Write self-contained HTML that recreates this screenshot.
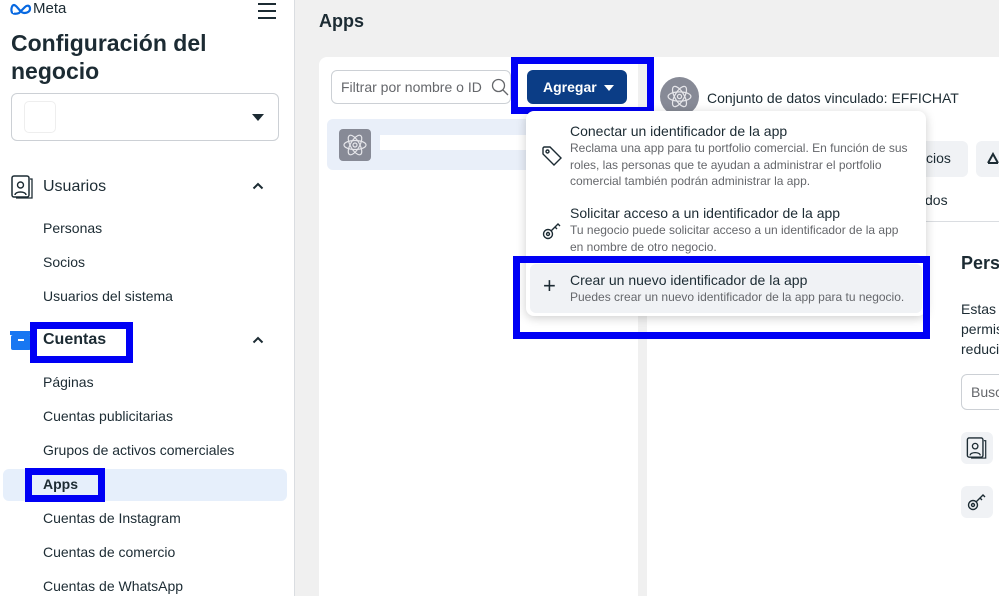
<!DOCTYPE html>
<html><head><meta charset="utf-8"><style>
*{box-sizing:border-box;margin:0;padding:0}
html,body{width:999px;height:596px;overflow:hidden}
body{background:#f0f0f0;font-family:"Liberation Sans",sans-serif;color:#1c2b33;position:relative}
.a{position:absolute}
.side{left:0;top:0;width:295px;height:596px;background:#fff;border-right:1px solid #dadde1}
.t{position:absolute;white-space:nowrap}
.nav{font-size:14px;left:43px;color:#1c2b33}
.hl{position:absolute;border:7px solid #0000f5}
.sm{font-size:12px;color:#65676b;line-height:16.5px}
</style></head><body>
<div class="a side">
 <svg class="a" style="left:10px;top:3px" width="22" height="12" viewBox="0 0 22 12"><path d="M3 10C0.5 10 1 2 4 2C7 2 10 10 14 10C18 10 20 8 20 6C20 2 17 2 15 4L9 10C7 11 3 11 3 10" fill="none" stroke="#0668e1" stroke-width="2.2"/></svg>
 <div class="t" style="left:33px;top:0px;font-size:15px;color:#1c2b33">Meta</div>
 <div class="a" style="left:258px;top:3px;width:18px;height:2px;background:#1c2b33;box-shadow:0 7px 0 #1c2b33,0 14px 0 #1c2b33"></div>
 <div class="t" style="left:11px;top:29px;font-size:23px;font-weight:bold;line-height:28px;color:#1c2b33">Configuración del<br>negocio</div>
 <div class="a" style="left:11px;top:93px;width:268px;height:48px;border:1px solid #ccd0d5;border-radius:6px"></div>
 <div class="a" style="left:24px;top:101px;width:32px;height:32px;border:1px solid #eee;border-radius:5px"></div>
 <div class="a" style="left:252px;top:114px;border-left:6px solid transparent;border-right:6px solid transparent;border-top:7px solid #1c2b33"></div>
 <svg class="a" style="left:11px;top:175px" width="23" height="24" viewBox="0 0 23 24"><rect x="1" y="1" width="17" height="21" rx="2" fill="none" stroke="#1c2b33" stroke-width="1.5"/><path d="M19 4h2v19H5" fill="none" stroke="#1c2b33" stroke-width="1.3"/><circle cx="9.5" cy="10" r="3" fill="none" stroke="#1c2b33" stroke-width="1.4"/><path d="M4 20c0-4 11-4 11 0" fill="none" stroke="#1c2b33" stroke-width="1.4"/></svg>
 <div class="t" style="left:43px;top:178px;font-size:16px">Usuarios</div>
 <svg class="a" style="left:252px;top:182px" width="12" height="8" viewBox="0 0 12 8"><path d="M1.5 6.5L6 2l4.5 4.5" fill="none" stroke="#1c2b33" stroke-width="2"/></svg>
 <div class="t nav" style="top:220px">Personas</div>
 <div class="t nav" style="top:254px">Socios</div>
 <div class="t nav" style="top:288px">Usuarios del sistema</div>
 <div class="a" style="left:11px;top:335px;width:20px;height:15px;background:#1877f2;border-radius:2px"></div>
 <div class="a" style="left:10px;top:331px;width:22px;height:4px;background:#1877f2"></div>
 <div class="a" style="left:18px;top:339px;width:6px;height:1.5px;background:#fff"></div>
 <div class="t" style="left:43px;top:331px;font-size:16px;font-weight:bold">Cuentas</div>
 <svg class="a" style="left:252px;top:336px" width="12" height="8" viewBox="0 0 12 8"><path d="M1.5 6.5L6 2l4.5 4.5" fill="none" stroke="#1c2b33" stroke-width="2"/></svg>
 <div class="hl" style="left:30px;top:322px;width:103px;height:41px"></div>
 <div class="t nav" style="top:374px">Páginas</div>
 <div class="t nav" style="top:408px">Cuentas publicitarias</div>
 <div class="t nav" style="top:442px">Grupos de activos comerciales</div>
 <div class="a" style="left:3px;top:469px;width:284px;height:32px;background:#e6effb;border-radius:6px"></div>
 <div class="t nav" style="top:476px;font-weight:bold">Apps</div>
 <div class="hl" style="left:25px;top:468px;width:80px;height:34px"></div>
 <div class="t nav" style="top:510px">Cuentas de Instagram</div>
 <div class="t nav" style="top:544px">Cuentas de comercio</div>
 <div class="t nav" style="top:578px">Cuentas de WhatsApp</div>
</div>
<div class="t" style="left:319px;top:11px;font-size:18px;font-weight:bold">Apps</div>
<div class="a" style="left:319px;top:57px;width:319px;height:560px;background:#fff;border-radius:8px"></div>
<div class="a" style="left:331px;top:70px;width:180px;height:34px;border:1px solid #ccd0d5;border-radius:6px"></div>
<div class="t" style="left:341px;top:79px;font-size:14px;color:#65676b">Filtrar por nombre o ID</div>
<svg class="a" style="left:491px;top:78px" width="18" height="18" viewBox="0 0 18 18"><circle cx="7.5" cy="7.5" r="6" fill="none" stroke="#65676b" stroke-width="1.3"/><path d="M12 12l5 5" stroke="#65676b" stroke-width="1.3"/></svg>
<div class="a" style="left:327px;top:119px;width:311px;height:51px;background:#e9eff9;border-radius:6px"></div>
<div class="a" style="left:339px;top:129px;width:32px;height:32px;background:#878a96;border-radius:4px"></div>
<svg class="a" style="left:341px;top:131px" width="28" height="28" viewBox="0 0 28 28" fill="none" stroke="#e6e6ea" stroke-width="1.2"><ellipse cx="14" cy="14" rx="11" ry="4.5"/><ellipse cx="14" cy="14" rx="11" ry="4.5" transform="rotate(60 14 14)"/><ellipse cx="14" cy="14" rx="11" ry="4.5" transform="rotate(-60 14 14)"/><circle cx="14" cy="14" r="2"/></svg>
<div class="a" style="left:380px;top:135px;width:150px;height:15px;background:#fff"></div>
<div class="a" style="left:647px;top:57px;width:360px;height:560px;background:#fff;border-radius:8px 0 0 8px"></div>
<div class="a" style="left:647px;top:221px;width:360px;height:1px;background:#dadde1"></div>
<div class="a" style="left:660px;top:77px;width:39px;height:39px;background:#878a96;border-radius:50%"></div>
<svg class="a" style="left:665px;top:82px" width="29" height="29" viewBox="0 0 28 28" fill="none" stroke="#e6e6ea" stroke-width="1.2"><ellipse cx="14" cy="14" rx="11" ry="4.5"/><ellipse cx="14" cy="14" rx="11" ry="4.5" transform="rotate(60 14 14)"/><ellipse cx="14" cy="14" rx="11" ry="4.5" transform="rotate(-60 14 14)"/><circle cx="14" cy="14" r="2"/></svg>
<div class="t" style="left:707px;top:90px;font-size:14px">Conjunto de datos vinculado: EFFICHAT</div>
<div class="a" style="left:870px;top:141px;width:98px;height:36px;background:#f0f2f5;border-radius:6px"></div>
<div class="t" style="left:926px;top:150px;font-size:14px">cios</div>
<div class="a" style="left:976px;top:141px;width:40px;height:36px;background:#f0f2f5;border-radius:6px"></div>
<svg class="a" style="left:986px;top:152px" width="14" height="13" viewBox="0 0 14 13"><path d="M2 11L7 2l5 9M2 11h10" fill="none" stroke="#1c2b33" stroke-width="2"/></svg>
<div class="t" style="left:925px;top:192px;font-size:14px">dos</div>
<div class="t" style="left:961px;top:253px;font-size:18px;font-weight:bold">Pers</div>
<div class="t" style="left:961px;top:299px;font-size:14px;line-height:20px">Estas<br>permis<br>reduci</div>
<div class="a" style="left:961px;top:374px;width:60px;height:36px;border:1px solid #ccd0d5;border-radius:6px"></div>
<div class="t" style="left:971px;top:384px;font-size:14px;color:#65676b">Busc</div>
<div class="a" style="left:961px;top:432px;width:32px;height:32px;background:#f0f2f5;border-radius:6px"></div>
<div class="a" style="left:961px;top:486px;width:32px;height:32px;background:#f0f2f5;border-radius:6px"></div>
<svg class="a" style="left:966px;top:437px" width="22" height="22" viewBox="0 0 23 24"><rect x="1" y="1" width="17" height="21" rx="2" fill="none" stroke="#1c2b33" stroke-width="1.5"/><path d="M19 4h2v19H5" fill="none" stroke="#1c2b33" stroke-width="1.3"/><circle cx="9.5" cy="10" r="3" fill="none" stroke="#1c2b33" stroke-width="1.4"/><path d="M4 20c0-4 11-4 11 0" fill="none" stroke="#1c2b33" stroke-width="1.4"/></svg>
<svg class="a" style="left:967px;top:491px" width="20" height="20" viewBox="0 0 20 20" fill="none" stroke="#1c2b33" stroke-width="1.4"><circle cx="6" cy="14" r="4.5"/><circle cx="6" cy="14" r="1.5"/><path d="M9 11l7-7 2 2M13 7l2 2"/></svg>
<div class="a" style="left:527px;top:70px;width:100px;height:34px;background:#0b3d86;border-radius:6px"></div>
<div class="t" style="left:543px;top:79px;font-size:14px;font-weight:bold;color:#fff">Agregar</div>
<div class="a" style="left:604px;top:85px;border-left:5px solid transparent;border-right:5px solid transparent;border-top:6px solid #fff"></div>
<div class="hl" style="left:511px;top:57px;width:143px;height:57px"></div>
<div class="a" style="left:526px;top:111px;width:400px;height:205px;background:#fff;border-radius:8px;box-shadow:0 2px 10px rgba(0,0,0,.2)"></div>
<svg class="a" style="left:541px;top:145px" width="22" height="22" viewBox="0 0 22 22" fill="none" stroke="#1c2b33" stroke-width="1.4"><path d="M2 3v6l11 11 7-7L9 2H3z"/><circle cx="6.5" cy="6.5" r="1.5"/></svg>
<div class="t" style="left:570px;top:123px;font-size:14px">Conectar un identificador de la app</div>
<div class="t sm" style="left:570px;top:140px">Reclama una app para tu portfolio comercial. En función de sus<br>roles, las personas que te ayudan a administrar el portfolio<br>comercial también podrán administrar la app.</div>
<svg class="a" style="left:542px;top:220px" width="20" height="20" viewBox="0 0 20 20" fill="none" stroke="#1c2b33" stroke-width="1.4"><circle cx="6" cy="14" r="4.5"/><circle cx="6" cy="14" r="1.5"/><path d="M9 11l7-7 2 2M13 7l2 2"/></svg>
<div class="t" style="left:570px;top:205px;font-size:14px">Solicitar acceso a un identificador de la app</div>
<div class="t sm" style="left:570px;top:222px">Tu negocio puede solicitar acceso a un identificador de la app<br>en nombre de otro negocio.</div>
<div class="a" style="left:530px;top:264px;width:392px;height:49px;background:#f0f2f5;border-radius:6px"></div>
<div class="t" style="left:543px;top:273px;font-size:22px;font-weight:300">+</div>
<div class="t" style="left:570px;top:272px;font-size:14px">Crear un nuevo identificador de la app</div>
<div class="t sm" style="left:570px;top:289px">Puedes crear un nuevo identificador de la app para tu negocio.</div>
<div class="hl" style="left:513px;top:256px;width:417px;height:83px"></div>
</body></html>
